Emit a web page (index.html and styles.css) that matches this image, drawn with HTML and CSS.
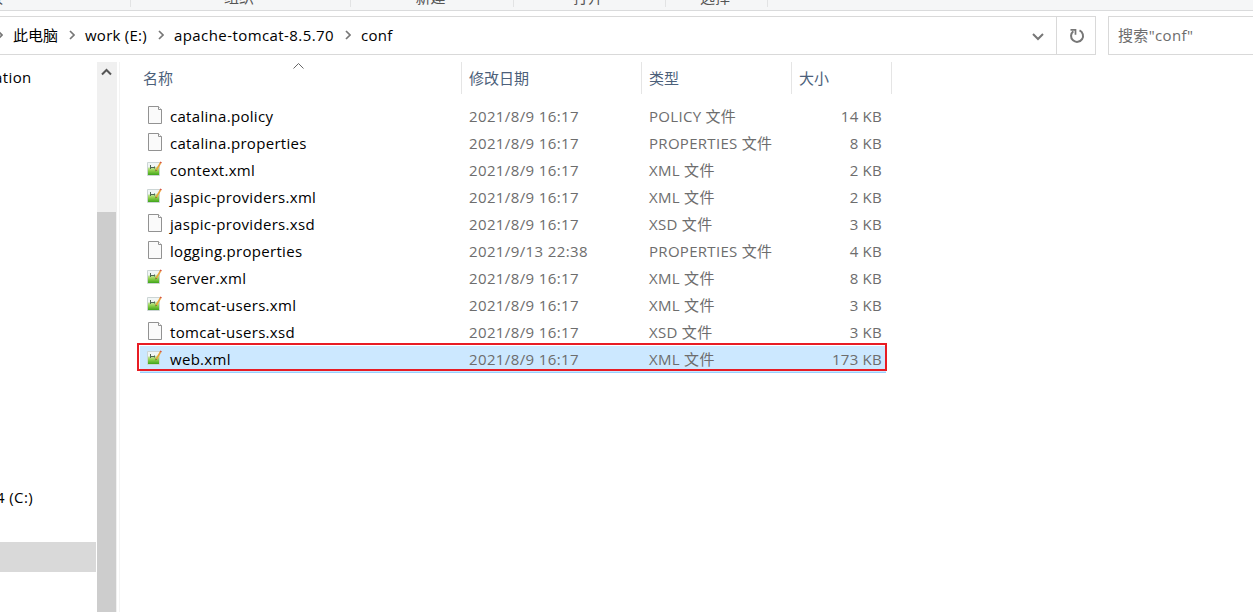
FILE: index.html
```html
<!DOCTYPE html>
<html lang="zh-CN">
<head>
    <meta charset="UTF-8">
    <meta name="viewport" content="width=device-width, initial-scale=1.0">
    <title>conf</title>
    <link rel="stylesheet" href="styles.css">
</head>
<body>
    <svg width="0" height="0" class="symbols">
        <linearGradient id="leaf" x1="0" y1="0" x2="0" y2="1">
            <stop offset="0" stop-color="#d5edbd"/>
            <stop offset=".5" stop-color="#8fd04a"/>
            <stop offset="1" stop-color="#3fa51c"/>
        </linearGradient>
        <symbol id="file" viewBox="0 0 16 20">
            <path d="M1.500 1.500h10l3 3v14h-13z" fill="#fafafa" stroke="#929292"/>
            <path d="M11.500 1.500v3h3" fill="#fff" stroke="#929292"/>
        </symbol>
        <symbol id="xml" viewBox="0 0 16 16">
            <path d="M1.500 1.500h12v13h-12z" fill="#f1f6f5" stroke="#ccd5d5"/>
            <path d="M2 6.500l11-1V14H2z" fill="url(#leaf)"/>
            <path d="M4.500 4v4M4.500 6.500h4M8.500 5.500v2" stroke="#4f6653" fill="none"/>
            <path d="M14.500 2L10 9.500" stroke="#eaa53a" stroke-width="1.600"/>
            <path d="M14 1l1.500 1" stroke="#d5523c" stroke-width="1.500"/>
            <path d="M9.500 8.500v2l1.500-1" fill="#65573a"/>
        </symbol>
        <symbol id="chevron" viewBox="0 0 6 10">
            <path d="M1 1l4 4-4 4" fill="none" stroke="#777" stroke-width="1.700"/>
        </symbol>
    </svg>

    <div class="ribbon">
        <div class="group group-clip"><span>板</span></div>
        <div class="group group-organize"><span>组织</span></div>
        <div class="group group-new"><span>新建</span></div>
        <div class="group group-open"><span>打开</span></div>
        <div class="group group-select"><span>选择</span></div>
    </div>

    <div class="toolbar">
        <div class="address">
            <svg class="chev first"><use href="#chevron"/></svg>
            <span class="crumb pc">此电脑</span>
            <svg class="chev"><use href="#chevron"/></svg>
            <span class="crumb drive">work (E:)</span>
            <svg class="chev"><use href="#chevron"/></svg>
            <span class="crumb tomcat">apache-tomcat-8.5.70</span>
            <svg class="chev"><use href="#chevron"/></svg>
            <span class="crumb">conf</span>
            <svg class="drop" viewBox="0 0 12 8"><path d="M1 1l5 5 5-5" fill="none" stroke="#777" stroke-width="2"/></svg>
        </div>
        <div class="refresh">
            <svg width="16" height="16" viewBox="0 0 16 16">
                <path d="M10.500 2.400A6 6 0 1 1 4.300 3.200" fill="none" stroke="#777" stroke-width="2"/>
                <path d="M1.500 1.800h5v5" fill="none" stroke="#777" stroke-width="1.700"/>
            </svg>
        </div>
        <div class="search">搜索"conf"</div>
    </div>

    <div class="content">
        <div class="sidebar">
            <div class="tree-item item-top"><span>ation</span></div>
            <div class="tree-item item-disk"><span>4 (C:)</span></div>
            <div class="tree-item item-current"></div>
        </div>
        <div class="scrollbar">
            <svg width="11" height="8" viewBox="0 0 11 8"><path d="M1 6.500L5.500 2 10 6.500" fill="none" stroke="#555" stroke-width="2"/></svg>
            <div class="thumb"></div>
        </div>
        <div class="files">
            <div class="header">
                <div class="name">名称<svg class="sort" width="11" height="6" viewBox="0 0 11 6"><path d="M.5 5.500l5-5 5 5" fill="none" stroke="#666"/></svg></div>
                <div>修改日期</div>
                <div>类型</div>
                <div>大小</div>
            </div>
            <div class="row">
                <svg class="icon"><use href="#file"/></svg>
                <span class="filename">catalina.policy</span><span class="date">2021/8/9 16:17</span><span class="type">POLICY 文件</span><span class="size">14 KB</span>
            </div>
            <div class="row">
                <svg class="icon"><use href="#file"/></svg>
                <span class="filename">catalina.properties</span><span class="date">2021/8/9 16:17</span><span class="type">PROPERTIES 文件</span><span class="size">8 KB</span>
            </div>
            <div class="row">
                <svg class="icon xml"><use href="#xml"/></svg>
                <span class="filename">context.xml</span><span class="date">2021/8/9 16:17</span><span class="type">XML 文件</span><span class="size">2 KB</span>
            </div>
            <div class="row">
                <svg class="icon xml"><use href="#xml"/></svg>
                <span class="filename">jaspic-providers.xml</span><span class="date">2021/8/9 16:17</span><span class="type">XML 文件</span><span class="size">2 KB</span>
            </div>
            <div class="row">
                <svg class="icon"><use href="#file"/></svg>
                <span class="filename">jaspic-providers.xsd</span><span class="date">2021/8/9 16:17</span><span class="type">XSD 文件</span><span class="size">3 KB</span>
            </div>
            <div class="row">
                <svg class="icon"><use href="#file"/></svg>
                <span class="filename">logging.properties</span><span class="date">2021/9/13 22:38</span><span class="type">PROPERTIES 文件</span><span class="size">4 KB</span>
            </div>
            <div class="row">
                <svg class="icon xml"><use href="#xml"/></svg>
                <span class="filename">server.xml</span><span class="date">2021/8/9 16:17</span><span class="type">XML 文件</span><span class="size">8 KB</span>
            </div>
            <div class="row">
                <svg class="icon xml"><use href="#xml"/></svg>
                <span class="filename">tomcat-users.xml</span><span class="date">2021/8/9 16:17</span><span class="type">XML 文件</span><span class="size">3 KB</span>
            </div>
            <div class="row">
                <svg class="icon"><use href="#file"/></svg>
                <span class="filename">tomcat-users.xsd</span><span class="date">2021/8/9 16:17</span><span class="type">XSD 文件</span><span class="size">3 KB</span>
            </div>
            <div class="row selected">
                <svg class="icon xml"><use href="#xml"/></svg>
                <span class="filename">web.xml</span><span class="date">2021/8/9 16:17</span><span class="type">XML 文件</span><span class="size">173 KB</span>
                <div class="mark"></div>
            </div>
        </div>
    </div>
</body>
</html>
```

FILE: styles.css
```css
* {
    box-sizing: border-box;
}

body {
    margin: 0;
    height: 612px;
    overflow: hidden;
    background: #fff;
    color: #000;
    font-family: "Open Sans", "Noto Sans CJK SC", sans-serif;
    font-size: 15px;
    line-height: 20px;
    white-space: nowrap;
}

svg {
    flex: none;
}

.symbols {
    display: block;
    height: 0;
}

/* bottom edge of the ribbon */
.ribbon {
    display: flex;
    height: 11px;
    background: #f5f6f7;
    border-bottom: 1px solid #dadbdc;
    overflow: hidden;
}

.group {
    display: flex;
    justify-content: center;
    align-items: flex-end;
    height: 7px;
    padding-right: 3px;
    border-right: 1px solid #e2e3e4;
    color: #555;
}

.group span {
    margin-bottom: 0;
}

.group-clip {
    width: 131px;
    justify-content: flex-start;
}

.group-clip span {
    margin-left: -12px;
}

.group-organize {
    width: 220px;
}

.group-new {
    width: 163px;
}

.group-open {
    width: 152px;
}

.group-select {
    width: 102px;
}

.toolbar {
    display: flex;
    height: 39px;
    margin-top: 5px;
}

.address {
    display: flex;
    align-items: center;
    width: 1056px;
    border: 1px solid #d9d9d9;
    border-width: 1px 0;
}

.crumb {
    margin-top: -2px;
    letter-spacing: 0.25px;
}

.chev {
    width: 6px;
    height: 10px;
    margin: -2px 10px 0;
}

.chev.first {
    margin-left: -3px;
}

.pc {
    width: 46px;
    letter-spacing: 0;
}

.drive {
    width: 63px;
}

.tomcat {
    width: 161px;
    letter-spacing: 0.42px;
}

.drop {
    width: 12px;
    height: 8px;
    margin: 2px 12px 0 auto;
}

.refresh {
    display: flex;
    align-items: center;
    justify-content: center;
    width: 40px;
    padding-left: 2px;
    border: 1px solid #d9d9d9;
}

.search {
    flex: 1;
    margin-left: 12px;
    padding: 8px 9px;
    border: 1px solid #d9d9d9;
    border-right: 0;
    color: #6d6d6d;
    letter-spacing: 0.35px;
}

.content {
    display: flex;
    height: 550px;
    margin-top: 7px;
}

.sidebar {
    width: 97px;
    overflow: hidden;
    letter-spacing: 0.4px;
}

.tree-item {
    width: 96px;
    height: 30px;
    line-height: 30px;
}

.item-top span {
    margin-left: -6px;
}

.item-disk {
    margin-top: 390px;
}

.item-disk span {
    margin-left: -4px;
}

.item-current {
    margin-top: 30px;
    background: #d9d9d9;
}

.scrollbar {
    display: flex;
    flex-direction: column;
    width: 20px;
    background: #f0f0f0;
}

.scrollbar svg {
    margin: 6px 0 0 4px;
}

.thumb {
    width: 19px;
    height: 400px;
    margin-top: auto;
    background: #cdcdcd;
}

.files {
    flex: 1;
    margin-left: 2px;
    border-left: 1px solid #f3f3f3;
}

.header {
    display: grid;
    grid-template-columns: 342px 180px 150px 100px;
    height: 32px;
    margin-bottom: 9px;
    color: #4c607a;
    line-height: 32px;
}

.header div {
    border-right: 1px solid #e5e5e5;
    padding-left: 7px;
}

.header .name {
    display: flex;
    padding-left: 23px;
}

.sort {
    margin: 1px 0 0 120px;
}

.row {
    position: relative;
    display: grid;
    grid-template-columns: 30px 299px 180px 150px 87px;
    width: 746px;
    height: 27px;
    margin-left: 20px;
    color: #6d6d6d;
    line-height: 27px;
}

.icon {
    width: 16px;
    height: 20px;
    margin: 2px 0 0 7px;
}

.icon.xml {
    height: 16px;
    margin: 4px 0 0 6px;
}

.filename {
    color: #000;
    letter-spacing: 0.3px;
}

.date {
    letter-spacing: 0.38px;
}

.type {
    letter-spacing: 0.3px;
}

.size {
    padding-right: 4px;
    text-align: right;
    letter-spacing: 0.25px;
}

.selected {
    background: #cce8ff;
    border-bottom: 1px solid #99d1ff;
}

.mark {
    position: absolute;
    top: -3px;
    left: -3px;
    width: 750px;
    height: 28px;
    border: 2px solid #e81c24;
}
```
